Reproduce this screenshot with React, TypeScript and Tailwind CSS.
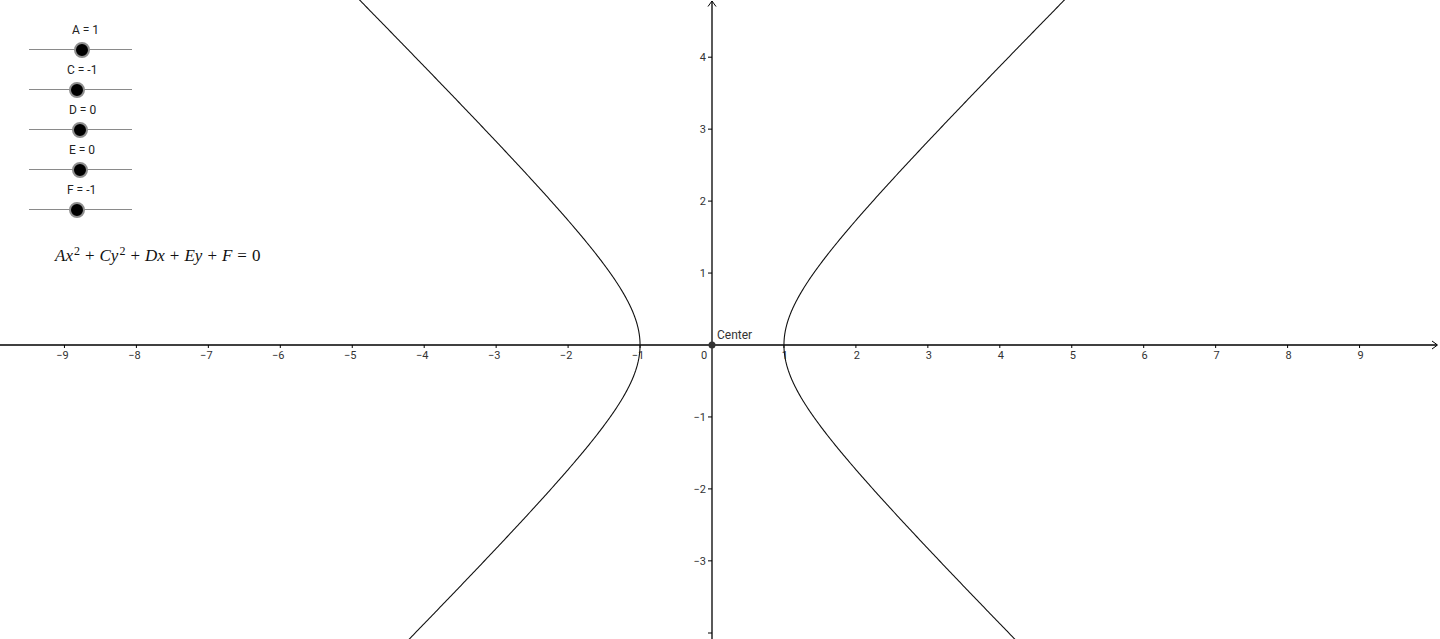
import React from 'react';

const W = 1440;
const H = 639;
const OX = 712;
const OY = 345;
const U = 71.95;

interface SliderItem {
  label: string;
  knob: number; // knob centre, px from line start
  labelLeft: number;
}

const SLIDERS: SliderItem[] = [
  { label: 'A = 1', knob: 53, labelLeft: 43 },
  { label: 'C = -1', knob: 48, labelLeft: 38 },
  { label: 'D = 0', knob: 51, labelLeft: 40 },
  { label: 'E = 0', knob: 51, labelLeft: 40 },
  { label: 'F = -1', knob: 48, labelLeft: 38 },
];

function branch(sign: 1 | -1) {
  const pts: string[] = [];
  const yMax = OY / U + 0.1;
  const yMin = -(H - OY) / U - 0.1;
  for (let i = 0; i <= 400; i++) {
    const y = yMin + ((yMax - yMin) * i) / 400;
    const x = sign * Math.sqrt(1 + y * y);
    pts.push(`${(OX + x * U).toFixed(2)},${(OY - y * U).toFixed(2)}`);
  }
  return pts.join(' ');
}

function Graph() {
  const xs = [-9, -8, -7, -6, -5, -4, -3, -2, -1, 1, 2, 3, 4, 5, 6, 7, 8, 9];
  const ys = [4, 3, 2, 1, -1, -2, -3];
  const num = (n: number) => (n < 0 ? `\u2212${-n}` : `${n}`);

  return (
    <svg width={W} height={H} viewBox={`0 0 ${W} ${H}`} className="absolute inset-0">
      {/* axes */}
      <line x1={0} y1={OY} x2={1437} y2={OY} stroke="#000" strokeWidth={1.3} />
      <line x1={OX} y1={1} x2={OX} y2={H} stroke="#000" strokeWidth={1.3} />
      <polyline points="1432,341 1437.5,345 1432,349" fill="none" stroke="#000" strokeWidth={1} />
      <polyline points="708,6.5 712,1 716,6.5" fill="none" stroke="#000" strokeWidth={1} />

      {xs.map((n) => {
        const x = OX + n * U;
        return (
          <g key={`x${n}`}>
            <line x1={x} y1={OY} x2={x} y2={OY + 3} stroke="#000" strokeWidth={1} />
            <text
              x={x + (n < 0 ? -2 : 1)}
              y={OY + 14}
              textAnchor="middle"
              fontSize={11}
              fontFamily="Roboto, 'Liberation Sans', sans-serif"
              fill="#333"
            >
              {num(n)}
            </text>
          </g>
        );
      })}
      {ys.map((n) => {
        const y = OY - n * U;
        return (
          <g key={`y${n}`}>
            <line x1={OX - 4} y1={y} x2={OX} y2={y} stroke="#000" strokeWidth={1} />
            <text
              x={OX - 6}
              y={y + 4}
              textAnchor="end"
              fontSize={11}
              fontFamily="Roboto, 'Liberation Sans', sans-serif"
              fill="#333"
            >
              {num(n)}
            </text>
          </g>
        );
      })}
      <line x1={OX - 4} y1={633} x2={OX} y2={633} stroke="#000" strokeWidth={1} />
      <text x={704} y={359} textAnchor="middle" fontSize={11} fontFamily="Roboto, 'Liberation Sans', sans-serif" fill="#333">
        0
      </text>

      {/* hyperbola x^2 - y^2 = 1 */}
      <polyline points={branch(1)} fill="none" stroke="#111" strokeWidth={1.1} />
      <polyline points={branch(-1)} fill="none" stroke="#111" strokeWidth={1.1} />

      {/* center point */}
      <circle cx={OX} cy={OY} r={3.5} fill="#333" />
      <text x={717} y={339} fontSize={12} fontFamily="Roboto, 'Liberation Sans', sans-serif" fill="#333">
        Center
      </text>
    </svg>
  );
}

function Slider({ item }: { item: SliderItem }) {
  return (
    <div className="flex flex-col h-[40px]">
      <div
        className="h-[18px] leading-[18px] text-[12px] text-[#222] whitespace-nowrap"
        style={{ paddingLeft: item.labelLeft }}
      >
        {item.label}
      </div>
      <div className="relative h-[22px] w-[103px]">
        <div className="absolute left-0 right-0 top-[10px] h-px bg-[#8a8a8a]" />
        <div
          className="absolute top-[2.5px] w-[16px] h-[16px] rounded-full bg-black border-[2px] border-[#8f8f8f]"
          style={{ left: item.knob - 8 }}
        />
      </div>
    </div>
  );
}

const Op = ({ children }: { children: React.ReactNode }) => (
  <span className="mx-[5px] not-italic">{children}</span>
);

export default function App() {
  return (
    <div className="relative w-[1440px] h-[639px] overflow-hidden bg-white" style={{ fontFamily: "Roboto, 'Liberation Sans', sans-serif" }}>
      <Graph />
      <div className="absolute left-[29px] top-[21px] flex flex-col">
        {SLIDERS.map((s) => (
          <Slider key={s.label} item={s} />
        ))}
        <div
          className="mt-[25px] ml-[26px] text-[17px] leading-[20px] text-[#111] whitespace-nowrap"
          style={{ fontFamily: "'Liberation Serif', 'DejaVu Serif', serif" }}
        >
          <i>Ax</i>
          <sup className="text-[12px] ml-[1px]">2</sup>
          <Op>+</Op>
          <i>Cy</i>
          <sup className="text-[12px] ml-[1px]">2</sup>
          <Op>+</Op>
          <i>Dx</i>
          <Op>+</Op>
          <i>Ey</i>
          <Op>+</Op>
          <i>F</i>
          <Op>=</Op>0
        </div>
      </div>
    </div>
  );
}
